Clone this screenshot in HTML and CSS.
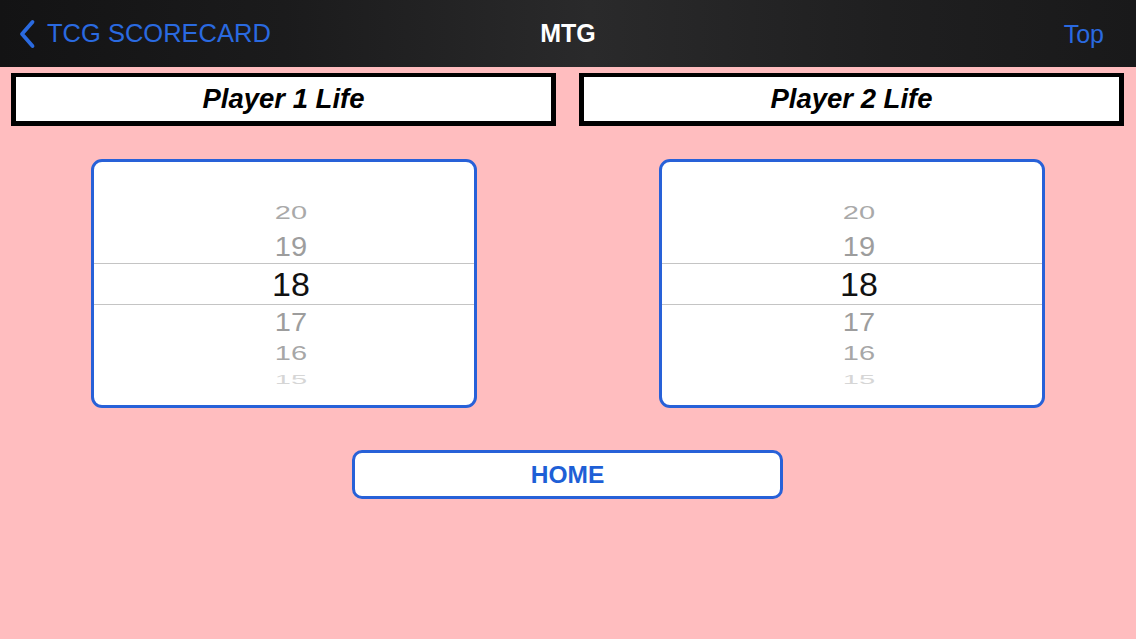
FILE: index.html
```html
<!DOCTYPE html>
<html>
<head>
<meta charset="utf-8">
<title>MTG</title>
<link rel="stylesheet" href="styles.css">
</head>
<body>
<div class="app">
  <header class="nav">
    <div class="nav-left">
      <svg class="chev" width="18" height="30" viewBox="0 0 18 30"><path d="M14.5 3 L4 15 L14.5 27" fill="none" stroke="#2a6ae0" stroke-width="3.8" stroke-linecap="round" stroke-linejoin="round"/></svg>
      <span class="back-text">TCG SCORECARD</span>
    </div>
    <div class="nav-title">MTG</div>
    <div class="nav-right">Top</div>
  </header>
  <main class="content">
    <div class="columns">
      <section class="col">
        <div class="label">Player 1 Life</div>
        <div class="picker">
          <div class="row r-2"><span>20</span></div>
          <div class="row r-1"><span>19</span></div>
          <div class="row sel"><span>18</span></div>
          <div class="row r1"><span>17</span></div>
          <div class="row r2"><span>16</span></div>
          <div class="row r3"><span>15</span></div>
        </div>
      </section>
      <section class="col">
        <div class="label">Player 2 Life</div>
        <div class="picker">
          <div class="row r-2"><span>20</span></div>
          <div class="row r-1"><span>19</span></div>
          <div class="row sel"><span>18</span></div>
          <div class="row r1"><span>17</span></div>
          <div class="row r2"><span>16</span></div>
          <div class="row r3"><span>15</span></div>
        </div>
      </section>
    </div>
    <button class="home">HOME</button>
  </main>
</div>
</body>
</html>
```

FILE: styles.css
```css
* { box-sizing: border-box; }
html, body {
  margin: 0;
  padding: 0;
  width: 1136px;
  height: 639px;
  overflow: hidden;
  background: #ffbdbf;
  font-family: "Liberation Sans", Arial, sans-serif;
}
.app {
  width: 1136px;
  height: 639px;
  display: flex;
  flex-direction: column;
}
.nav {
  height: 67px;
  flex: none;
  display: grid;
  grid-template-columns: 1fr auto 1fr;
  align-items: center;
  background: linear-gradient(90deg, #131314 0%, #1b1b1c 25%, #2a2a2b 52%, #1f1f20 78%, #19191a 100%);
}
.nav-left {
  display: flex;
  align-items: center;
  padding-left: 18px;
  gap: 11px;
  color: #2a6ae0;
}
.chev { display: block; margin-top: 1px; }
.back-text {
  font-size: 25.5px;
  line-height: 1;
  color: #2a6ae0;
  padding-top: 1px;
}
.nav-title {
  color: #ffffff;
  font-size: 25px;
  font-weight: bold;
  line-height: 1;
}
.nav-right {
  justify-self: end;
  padding-right: 32px;
  color: #2a6ae0;
  font-size: 25px;
  line-height: 1;
  padding-top: 2px;
}
.content {
  flex: 1;
  display: flex;
  flex-direction: column;
  padding: 6px 12px 0 11px;
}
.columns {
  display: grid;
  grid-template-columns: 545px 545px;
  column-gap: 23px;
}
.col {
  display: flex;
  flex-direction: column;
  align-items: center;
}
.label {
  width: 100%;
  height: 53px;
  background: #ffffff;
  border-style: solid;
  border-color: #000;
  border-width: 4px 5px 5px 5px;
  display: flex;
  align-items: center;
  justify-content: center;
  font-size: 27.5px;
  font-weight: bold;
  font-style: italic;
  color: #000;
}
.picker {
  margin-top: 33px;
  width: 386px;
  height: 249px;
  background: #ffffff;
  border: 3px solid #2861d8;
  border-radius: 11px;
  overflow: hidden;
  padding-top: 35px;
  display: flex;
  flex-direction: column;
}
.row {
  display: flex;
  align-items: center;
  justify-content: center;
  flex: none;
  padding-left: 15px;
  color: #9d9d9d;
  font-size: 29px;
}
.row span { display: block; line-height: 1; }
.r-2 { height: 33px; color: #a9a9a9; }
.r-2 span { transform: scaleY(0.62); }
.r-1 { height: 33px; }
.r-1 span { transform: scaleY(0.95); }
.sel {
  height: 42px;
  border-top: 1px solid #c4c4c4;
  border-bottom: 1px solid #c4c4c4;
  color: #111;
  font-size: 34px;
}
.r1 { height: 34px; }
.r1 span { transform: scaleY(0.88); }
.r2 { height: 29px; color: #a7a7a7; }
.r2 span { transform: scaleY(0.71); }
.r3 { height: 22px; color: #d6d6d6; }
.r3 span { transform: scaleY(0.43); }
.home {
  margin: 42px auto 0;
  width: 431px;
  height: 49px;
  background: #ffffff;
  border: 3px solid #2861d8;
  border-radius: 10px;
  color: #1e5fd6;
  font-family: "Liberation Sans", Arial, sans-serif;
  font-size: 24.5px;
  font-weight: bold;
  padding: 0;
}
```
